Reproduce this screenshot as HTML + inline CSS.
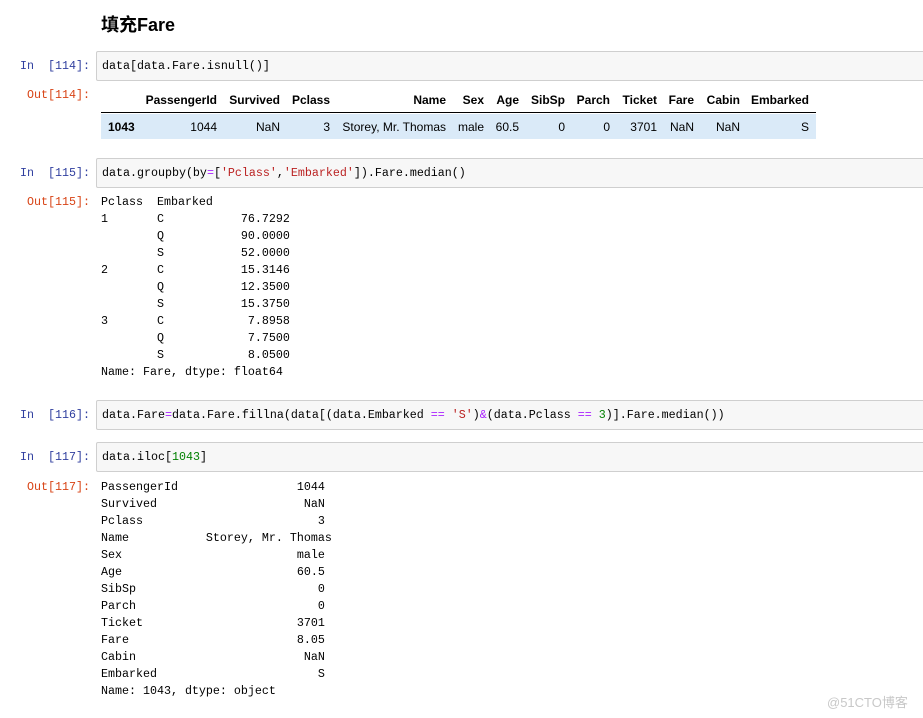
<!DOCTYPE html>
<html><head><meta charset="utf-8"><style>
html,body{margin:0;padding:0;background:#fff;width:923px;height:718px;overflow:hidden;position:relative;font-family:"Liberation Sans","Noto Sans CJK SC",sans-serif;}
.m{font-family:"Liberation Mono","Noto Sans CJK SC",monospace;font-size:11.67px;}
.lbl{position:absolute;left:0;width:90px;text-align:right;white-space:pre;line-height:17px;}
.in{color:#303f9f}.out{color:#d84315}
.box{position:absolute;left:96px;width:840px;height:28px;background:#f7f7f7;border:1px solid #cfcfcf;border-radius:2px;}
.box pre{margin:0;position:absolute;left:5px;top:6px;line-height:17px;color:#000;}
pre.o{position:absolute;left:101px;margin:0;line-height:17px;color:#000;}
.s{color:#ba2121}.op{color:#aa22ff}.n{color:#008000}
.t{position:absolute;font-size:12px;white-space:nowrap;color:#000;}
.th{font-weight:bold;top:93px;}
.td{top:120px;}
</style></head><body>
<div style="position:absolute;left:101px;top:11px;font-size:18px;font-weight:bold;color:#000;">填充Fare</div>

<div class="lbl m in" style="top:58px">In  [114]:</div>
<div class="box" style="top:51px"><pre class="m">data[data.Fare.isnull()]</pre></div>
<div class="lbl m out" style="top:87px">Out[114]:</div>
<div style="position:absolute;left:101px;top:112px;width:715px;height:1px;background:#000"></div>
<div style="position:absolute;left:101px;top:114px;width:715px;height:25px;background:#daeaf8"></div>
<span class="t th" style="right:706px">PassengerId</span>
<span class="t th" style="right:643px">Survived</span>
<span class="t th" style="right:593px">Pclass</span>
<span class="t th" style="right:477px">Name</span>
<span class="t th" style="right:439px">Sex</span>
<span class="t th" style="right:404px">Age</span>
<span class="t th" style="right:358px">SibSp</span>
<span class="t th" style="right:313px">Parch</span>
<span class="t th" style="right:266px">Ticket</span>
<span class="t th" style="right:229px">Fare</span>
<span class="t th" style="right:183px">Cabin</span>
<span class="t th" style="right:114px">Embarked</span>
<span class="t td" style="left:108px;font-weight:bold">1043</span>
<span class="t td" style="right:706px">1044</span>
<span class="t td" style="right:643px">NaN</span>
<span class="t td" style="right:593px">3</span>
<span class="t td" style="right:477px">Storey, Mr. Thomas</span>
<span class="t td" style="right:439px">male</span>
<span class="t td" style="right:404px">60.5</span>
<span class="t td" style="right:358px">0</span>
<span class="t td" style="right:313px">0</span>
<span class="t td" style="right:266px">3701</span>
<span class="t td" style="right:229px">NaN</span>
<span class="t td" style="right:183px">NaN</span>
<span class="t td" style="right:114px">S</span>

<div class="lbl m in" style="top:165px">In  [115]:</div>
<div class="box" style="top:158px"><pre class="m">data.groupby(by<span class="op">=</span>[<span class="s">'Pclass'</span>,<span class="s">'Embarked'</span>]).Fare.median()</pre></div>
<div class="lbl m out" style="top:194px">Out[115]:</div>
<pre class="m o" style="top:194px">Pclass  Embarked
1       C           76.7292
        Q           90.0000
        S           52.0000
2       C           15.3146
        Q           12.3500
        S           15.3750
3       C            7.8958
        Q            7.7500
        S            8.0500
Name: Fare, dtype: float64</pre>

<div class="lbl m in" style="top:407px">In  [116]:</div>
<div class="box" style="top:400px"><pre class="m">data.Fare<span class="op">=</span>data.Fare.fillna(data[(data.Embarked <span class="op">==</span> <span class="s">'S'</span>)<span class="op">&amp;</span>(data.Pclass <span class="op">==</span> <span class="n">3</span>)].Fare.median())</pre></div>

<div class="lbl m in" style="top:449px">In  [117]:</div>
<div class="box" style="top:442px"><pre class="m">data.iloc[<span class="n">1043</span>]</pre></div>
<div class="lbl m out" style="top:479px">Out[117]:</div>
<pre class="m o" style="top:479px">PassengerId                 1044
Survived                     NaN
Pclass                         3
Name           Storey, Mr. Thomas
Sex                         male
Age                         60.5
SibSp                          0
Parch                          0
Ticket                      3701
Fare                        8.05
Cabin                        NaN
Embarked                       S
Name: 1043, dtype: object</pre>

<div style="position:absolute;left:827px;top:692px;font-size:13px;color:#c8c8c8;">@51CTO博客</div>
</body></html>
